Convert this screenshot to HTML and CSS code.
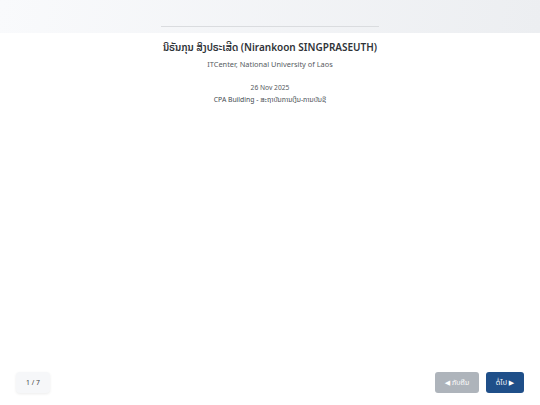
FILE: index.html
```html
<!DOCTYPE html>
<html lang="lo">
<head>
<meta charset="utf-8">
<link rel="stylesheet" href="styles.css">
</head>
<body>
<div class="page">
  <header class="top">
    <div class="rule"></div>
  </header>
  <main class="slide">
    <h1 class="title">ນິຣັນກຸນ ສິງປຣະເສີດ (Nirankoon SINGPRASEUTH)</h1>
    <p class="org">ITCenter, National University of Laos</p>
    <p class="date">26 Nov 2025</p>
    <p class="place">CPA Building - ສະຖາບັນການເງິນ-ການບັນຊີ</p>
  </main>
  <footer class="controls">
    <div class="counter">1 / 7</div>
    <div class="nav">
      <button class="btn btn-prev">◀ ກັບຄືນ</button>
      <button class="btn btn-next">ຕໍ່ໄປ ▶</button>
    </div>
  </footer>
</div>
</body>
</html>
```
FILE: styles.css
```css
html, body {
  margin: 0;
  padding: 0;
}
body {
  font-family: "Noto Sans", "Noto Sans Lao", "DejaVu Sans", sans-serif;
  background: #ffffff;
  color: #333;
}
.page {
  width: 540px;
  height: 405px;
  display: flex;
  flex-direction: column;
  overflow: hidden;
}
.top {
  height: 33px;
  flex: none;
  background: linear-gradient(100deg, #f9fafc 0%, #eceef1 100%);
  display: flex;
  justify-content: center;
  align-items: flex-start;
  box-sizing: border-box;
  padding-top: 26px;
}
.rule {
  width: 218px;
  height: 0;
  border-top: 1px solid #dadcdf;
}
.slide {
  flex: 1;
  text-align: center;
  padding-top: 6px;
}
.title {
  margin: 0;
  font-size: 10px;
  font-weight: 600;
  color: #2f3338;
  line-height: 16px;
}
.org {
  margin: 0;
  margin-top: 3px;
  font-size: 7.4px;
  color: #555a60;
  line-height: 12px;
}
.date {
  margin: 0;
  margin-top: 12px;
  font-size: 6.7px;
  color: #555a60;
  line-height: 11px;
}
.place {
  margin: 0;
  margin-top: 1px;
  font-size: 6.8px;
  font-weight: 400;
  color: #444a50;
  line-height: 11px;
}
.controls {
  flex: none;
  display: flex;
  justify-content: space-between;
  align-items: center;
  padding: 0 16px 12px 16px;
}
.counter {
  width: 34px;
  height: 21px;
  box-sizing: border-box;
  background: #f6f7f9;
  border-radius: 4px;
  box-shadow: 0 1px 3px rgba(0,0,0,0.08);
  font-size: 6.8px;
  color: #444;
  display: flex;
  align-items: center;
  justify-content: center;
}
.nav {
  display: flex;
  gap: 7px;
}
.btn {
  height: 21px;
  border: none;
  border-radius: 3px;
  font-family: inherit;
  font-size: 7px;
  color: #fff;
  padding: 0;
  display: flex;
  align-items: center;
  justify-content: center;
}
.btn-prev {
  width: 44px;
  background: #aeb4bb;
}
.btn-next {
  width: 38px;
  background: #1f4f89;
}
```
